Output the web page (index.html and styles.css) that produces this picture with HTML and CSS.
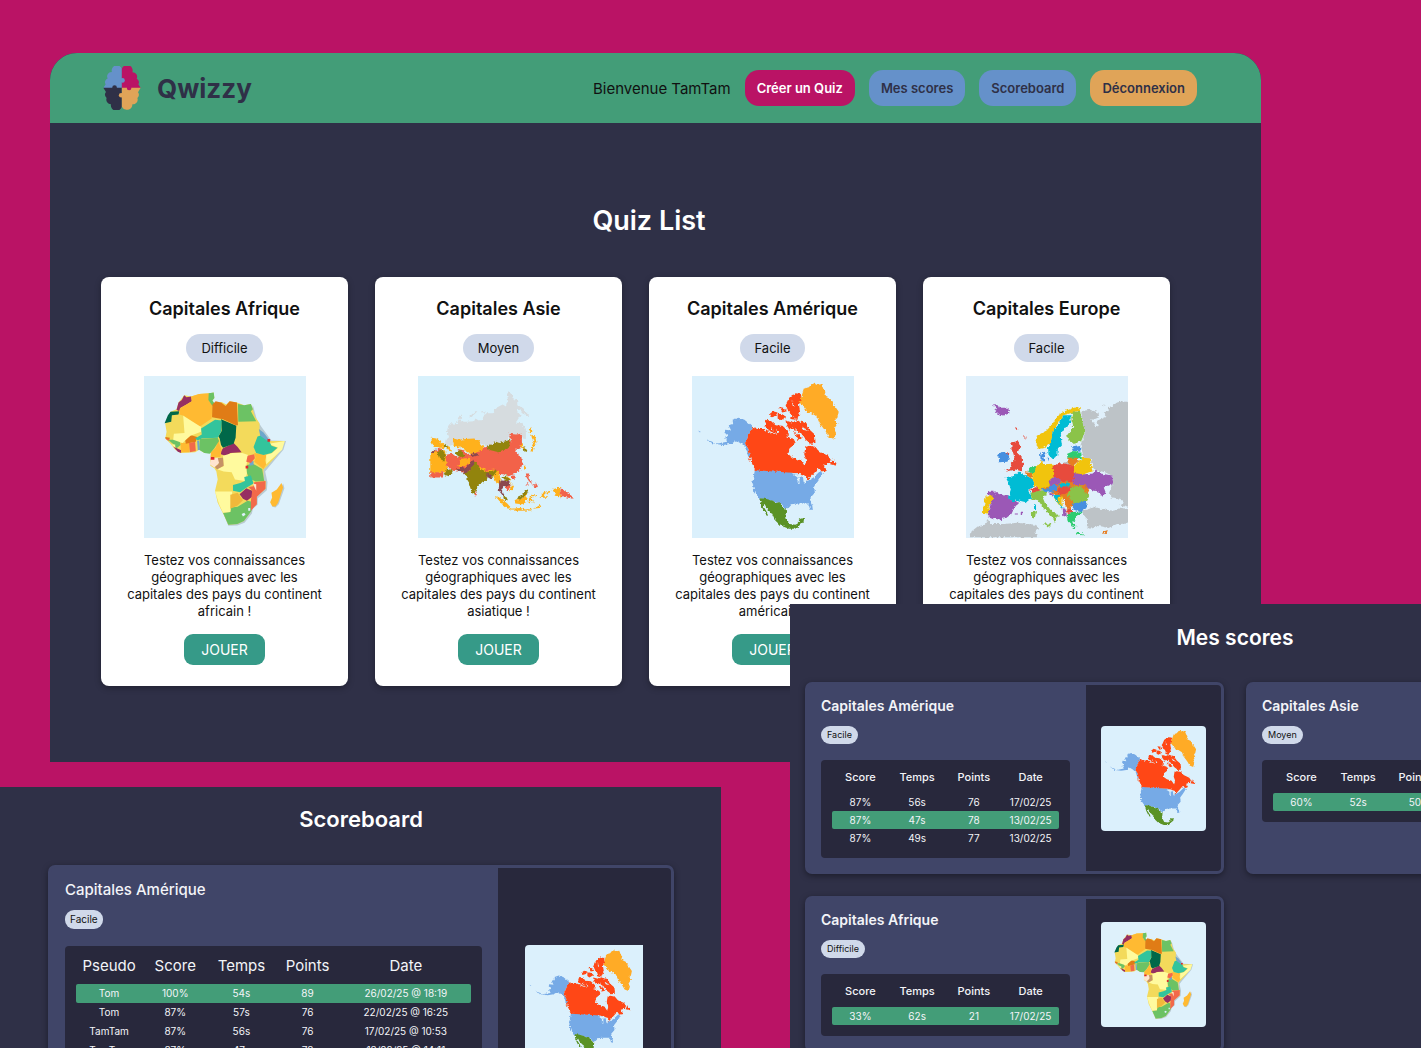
FILE: index.html
```
<!DOCTYPE html>
<html lang="fr">
<head>
<meta charset="utf-8">
<meta name="viewport" content="width=device-width, initial-scale=1">
<title>Qwizzy</title>
<link rel="stylesheet" href="styles.css">
</head>
<body>
<svg class="sprite" aria-hidden="true">
  <filter id="coast" x="0" y="0" width="1" height="1">
    <feTurbulence type="fractalNoise" baseFrequency="0.12" numOctaves="2" seed="4" result="noise"/>
    <feDisplacementMap in="SourceGraphic" in2="noise" scale="12" xChannelSelector="R" yChannelSelector="G"/>
  </filter>
  <symbol id="map-afrique" viewBox="24 18 488 488">
    <path fill="#def1fb" d="M24 18h488v488H24z"/>
    <path fill="#b9cbd2" d="M352 106L364 150 378 172 408 212 452 214 444 240 400 292 389 306 396 338 394 362 367 386 366 406 352 418 349 432 327 460 305 468 278 469 266 440zM443 342L447 356 430 404 420 414 410 412z"/>
    <path fill="#f3da5b" d="M145 76L166 80 190 72 222 70 234 68 236 84 230 92 236 104 258 96 272 104 282 94 304 98 326 106 346 102 352 118 358 140 372 160 372 178 392 206 404 214 448 214 440 235 420 262 396 288 384 300 384 330 391 336 390 358 362 382 362 402 348 412 345 428 325 455 305 464 278 466 266 440 258 424 246 400 238 364 246 330 242 306 236 296 224 288 224 268 228 260 224 250 206 250 190 240 178 248 134 250 118 240 104 222 88 206 92 186 88 162 104 126 122 118 128 98z"/>
    <path fill="#962f62" d="M122 120L128 98 138 90 145 76 152 82 166 80 168 94 152 104 134 114 130 124zM262 236L294 220 306 232 318 248 284 250 272 260 252 252zM112 230L136 242 136 250 126 246zM312 374L332 356 350 364 350 382 334 394 322 388z"/>
    <path fill="#006849" d="M86 160L96 136 104 126 130 124 128 134 108 136 106 156zM256 148L302 168 300 204 294 222 262 234 256 226 252 206 248 200 258 184z"/>
    <path fill="#ffba32" d="M166 80L190 72 222 70 220 92 230 106 228 146 196 168 190 170 144 138 130 134 132 116 168 94zM250 206L250 220 258 240 254 262 224 262 226 248 240 234zM356 250L394 256 388 272 392 284 384 298 356 276 360 264zM134 220L162 220 160 248 136 248zM438 340L443 354 428 400 420 411 410 410 404 398 410 384 408 370 424 360z"/>
    <path fill="#6cc264" d="M219 70L234 68 236 84 230 92 236 100 230 108 218 90zM307 102L326 106 346 102 352 118 346 124 362 154 308 156zM192 208L246 204 250 214 236 236 222 252 206 250 190 240zM96 210L130 210 134 226 122 236 114 224zM334 286L352 282 380 298 386 334 360 336 340 326 332 304zM262 430L284 428 286 414 306 412 336 394 346 396 348 424 325 455 305 464 278 466z"/>
    <path fill="#e07c16" d="M230 104L240 94 256 98 270 108 282 94 304 98 307 166 300 166 262 148 229 142zM148 212L164 196 184 202 180 216 150 222zM88 202L102 204 100 210 90 208z"/>
    <path fill="#fffa9e" d="M142 138L196 172 196 186 180 192 164 198 150 210 140 220 112 210 114 192 146 190zM400 222L448 214 440 240 392 284 392 256 410 250 428 234 408 226zM262 258L290 250 320 250 338 256 332 290 334 312 328 334 298 330 288 308 264 306 242 298 264 290zM238 366L290 366 284 428 262 430 250 404zM106 224L118 224 118 234z"/>
    <path fill="#33c49c" d="M178 206L198 194 196 176 238 150 258 152 256 186 246 204 198 206 186 212zM366 200L380 196 402 216 408 228 426 234 408 250 384 256 362 250 354 232zM292 346L314 340 328 334 326 322 346 318 354 342 330 356 314 368 292 364z"/>
    <path fill="#6da7cc" d="M370 178L384 188 398 206 396 214 374 198zM184 214L190 212 192 240 186 242zM342 276L354 274 354 286 342 288z"/>
    <path fill="#f2694a" d="M336 258L356 254 358 266 346 280 332 276zM160 220L178 216 180 244 162 248zM356 338L390 334 390 358 364 382 364 404 346 424 346 394 350 364 338 352 354 350zM88 206L100 208 98 214z"/>
    <path fill="#c69365" d="M240 266L262 264 264 288 244 300 236 290 248 284z"/>
    <path fill="#ffe5cf" d="M226 268L246 264 250 280 236 294 222 284zM352 342L362 344 362 364z"/>
    <path fill="#e0262c" d="M225 262h11v8h-11zM396 208h8v8h-8zM330 288h8v9h-8z"/>
    <path fill="#f1b83b" d="M284 376L306 370 322 392 306 408 284 418z"/>
    <path fill="#def1fb" d="M318 434L326 430 330 436 322 441zM338 416h6v8h-6z"/>
  </symbol>
  <symbol id="map-asie" viewBox="21 18 488 488">
    <path fill="#d8f1fc" d="M21 18h488v488H21z"/>
    <g filter="url(#coast)">
      <path fill="none" d="M21 18h488v488H21z"/>
      <path fill="#d6dcdf" d="M110 176L118 160 134 162 140 158 148 136 152 142 146 154 166 156 190 154 194 146 204 152 220 150 218 136 230 130 246 130 260 112 276 104 286 110 292 90 289 72 297 64 304 72 306 84 320 90 320 106 338 118 356 138 346 138 326 118 320 124 330 136 316 158 334 160 346 178 346 208 336 206 330 196 300 196 288 220 230 232 206 218 168 214 130 210 132 222 118 228 102 222 104 210 114 204 108 190zM174 142L194 124 200 124 182 142zM212 124h12v4h-12z"/>
      <path fill="#f2624a" d="M108 256L146 262 190 246 230 230 300 214 316 250 290 316 250 310 206 314 176 312 120 302z"/>
      <path fill="#ffb11b" d="M66 244L102 242 112 300 60 310z"/>
      <path fill="#ffb11b" d="M128 206L142 210 164 208 190 206 206 212 208 224 222 232 206 250 180 252 160 240 152 232 140 236 128 224zM142 290L148 268 178 264 178 282 150 292zM200 290L232 302 252 298 250 306 228 306 206 302zM58 250L72 248 84 266 98 274 112 296 108 308 58 310zM62 204L76 206 88 214 104 228 100 236 70 230 62 218zM104 226L118 232 120 246 112 242zM246 316L262 300 270 326 268 346 258 342zM286 318L300 328 298 338 310 350 306 360 294 366 304 350zM312 390L332 388 350 370 346 398 334 404 314 402zM254 380L266 384 290 402 300 414 292 418 276 406zM298 418L330 416 344 420 364 418 362 423 330 424 300 423zM366 418L380 412 392 404 386 416zM356 382L378 376 376 380 362 384 370 402 360 392 358 402 354 398zM394 370L404 366 400 382 394 380zM406 366L426 364 420 370 406 372zM426 360L444 354 450 358 450 384 436 378zM360 176L362 168 366 190 354 190zM362 194L374 200 378 218 370 232 366 246 360 250 362 234 370 216 364 204zM328 222L336 220 340 236 332 234zM340 288h6v12h-6zM388 380h24v5h-24z"/>
      <path fill="#f2624a" d="M196 248L212 244 230 230 262 248 290 240 302 214 296 192 316 194 334 192 334 224 328 236 314 240 320 250 318 254 332 262 336 282 330 298 316 312 294 320 276 312 250 300 232 302 204 292 188 270 202 262zM104 256L124 252 142 266 142 296 122 304 108 286zM58 308L98 308 96 324 58 324zM70 244L88 234 96 240 84 248zM140 238L160 242 170 254 162 258 146 246zM282 346L300 346 300 356 290 364zM450 356L478 372 490 388 470 384 460 380 450 384zM192 368L198 368 198 380 191 380zM304 318h8v10h-8zM346 312L356 312 354 326 366 340 356 336 348 324zM362 344L372 348 378 338 382 352 374 354zM344 350L354 336 350 346z"/>
      <path fill="#928410" d="M228 228L248 222 250 214 266 220 300 210 294 236 264 248 234 240zM178 284L196 276 204 296 232 308 256 300 258 306 240 328 232 318 228 332 208 344 200 352 192 370 184 372 174 340 168 320 160 312 178 302zM128 246L150 242 162 260 150 266 138 256zM98 314L110 296 126 306 114 320zM78 248L96 240 104 260 100 276 84 264zM272 322L288 318 296 334 284 336zM276 374L286 380 292 392 280 390zM316 386L336 376 346 362 352 366 342 378 330 390zM338 232L348 236 350 246 342 246zM102 222L110 228 110 238 102 232z"/>
      <path fill="#8b4a4f" d="M136 296L168 292 186 268 192 278 178 300 162 314 156 304 138 304zM174 254L196 250 206 256 186 262zM230 308L244 318 240 328 230 322zM266 332L290 334 300 346 280 350 272 362 282 378 276 378 264 362zM62 250L74 238 70 250z"/>
    </g>
  </symbol>
  <symbol id="map-amerique" viewBox="18 18 488 488">
    <path fill="#dbf0fc" d="M18 18h488v488H18z"/>
    <g filter="url(#coast)">
      <path fill="none" d="M18 18h488v488H18z"/>
      <path fill="#ffab26" d="M342 98L348 78 356 56 370 52 380 40 396 44 408 42 414 58 420 66 416 78 436 88 448 108 460 126 456 144 450 150 456 162 446 178 452 190 446 208 430 202 420 184 402 160 394 140 378 130 366 128 358 116z"/>
      <path fill="#76aae6" d="M140 150L158 144 176 150 200 170 178 222 188 238 194 262 188 260 180 234 166 220 152 212 136 222 112 226 84 222 104 220 124 216 118 204 130 196 116 190 118 180 136 182 128 166 142 162zM60 208L84 218 82 222zM36 182L44 186 42 188zM208 300L318 308 348 318 366 334 384 324 404 304 412 312 398 334 386 350 388 370 372 388 380 406 382 422 374 420 368 402 340 402 316 404 302 420 288 404 270 396 240 390 220 386 206 366 200 338z"/>
      <path fill="#ff4713" d="M200 170L214 178 236 178 252 188 272 194 300 198 310 204 322 206 330 222 312 236 308 254 324 266 346 272 358 290 362 270 356 254 360 230 372 228 390 232 402 246 428 258 436 270 430 282 414 286 420 304 408 306 400 294 388 308 370 328 360 336 362 320 348 316 328 310 210 302 196 276 188 238 178 222zM236 170L242 150 258 156 270 166 290 168 308 184 310 198 284 198 262 188 248 182zM304 100L312 82 330 70 346 72 346 92 340 104 344 126 334 150 318 148 316 130 306 122 300 106zM250 134L262 124 276 128 270 138 256 142zM276 130L292 134 302 142 284 152 276 146zM280 112L296 114 304 124 290 128zM300 152L320 158 332 152 356 158 370 178 388 194 390 220 376 222 358 208 344 190 322 176 312 180 302 164zM322 186L340 194 350 206 338 210zM434 284L442 266 444 276 456 280 454 288zM404 300L420 290 422 300zM186 266L192 268 192 278zM200 284L212 302 206 300z"/>
      <path fill="#dbf0fc" d="M318 92L326 108 322 110zM262 150L272 160 264 158zM308 132L328 142 310 140zM282 160L296 162 286 166zM330 170L336 196 330 192zM346 168L368 184 352 180zM272 176L280 190 274 190zM258 172L264 182 256 180zM322 314L346 314 350 322 342 322 342 344 336 342 336 324zM352 320L362 326 358 344 354 336z"/>
      <path fill="#5a9226" d="M221 386L240 388 262 394 270 400 282 398 288 408 304 424 302 446 312 464 330 466 340 460 340 450 356 446 354 458 346 464 338 472 332 482 326 478 310 478 284 468 266 450 258 432 244 418 236 402 234 412 246 432 248 440 240 436 228 412z"/>
    </g>
  </symbol>
  <symbol id="map-europe" viewBox="15 18 488 488">
    <path fill="#e0f0fb" d="M15 18h488v488H15z"/>
    <g filter="url(#coast)">
      <path fill="none" d="M15 18h488v488H15z"/>
      <path fill="#bdc3c7" d="M362 124L388 120 414 128 416 142 398 150 388 148 398 156 406 168 412 170 408 154 424 146 438 140 430 128 446 122 444 112 456 108 470 98 488 94 520 100V420L480 408 490 400 480 388 454 384 446 370 456 346 458 320 434 308 408 302 396 290 392 268 370 264 364 242 360 226 366 210 374 188 366 156zM424 106L432 104 432 110zM366 424L382 420 400 412 430 420 460 424 482 414 520 424V462L470 464 444 476 414 470 392 478 376 472 382 450 368 436zM26 504L32 486 52 470 72 466 80 452 88 464 130 464 170 460 224 466 232 478 222 490 230 504zM312 278L330 276 330 286 312 284z"/>
      <path fill="#e67e22" d="M218 316L276 290 336 286 366 306 384 362 372 396 330 412 306 388 270 368 236 358z"/>
      <path fill="#9b59b6" d="M96 104L110 102 114 114 142 114 146 130 128 138 110 132 102 124 110 118zM82 364L98 364 108 372 142 380 150 392 176 400 162 412 152 434 136 446 112 450 96 446 80 440 84 420 96 384 80 376zM336 310L370 314 398 312 406 300 420 312 456 318 458 340 430 354 436 370 426 382 414 366 386 360 370 346 340 346 330 332zM262 328L286 320 302 334 290 344 270 346 260 338zM306 416L318 422 318 442 308 440zM262 370L278 372 272 382zM162 432h8v5h-8zM180 430h4v4h-4z"/>
      <path fill="#f1c40f" d="M228 198L258 182 276 162 290 138 312 124 340 114 362 112 360 122 330 130 308 136 290 164 276 186 272 220 252 234 234 238 228 226zM74 382L96 378 98 388 84 410 82 432 62 430 70 404zM216 292L232 288 242 274 250 284 276 282 280 320 264 334 268 350 234 358 222 348 214 320zM340 290L364 264 388 266 392 290 396 304 370 314 340 310zM280 384L306 384 306 410 294 406z"/>
      <path fill="#00bcd4" d="M276 184L292 166 308 136 330 136 330 160 316 172 300 196 304 224 292 236 290 258 276 268 264 256 262 234 272 214zM134 322L160 320 174 306 196 318 216 328 222 346 206 360 212 386 196 398 170 392 156 398 142 384 150 360 144 342zM292 344L326 338 330 350 302 354zM276 378L304 374 290 388 300 412 310 416 296 404zM220 408L226 404 226 420 220 420z"/>
      <path fill="#8bc34a" d="M336 124L350 126 358 122 364 150 374 186 362 214 342 222 324 214 320 196 338 172 332 146zM210 370L232 362 256 362 258 378 244 380 252 398 272 424 298 440 288 442 284 460 274 442 250 418 232 392 212 388zM246 462L272 462 268 474 256 470zM214 428L226 426 222 448 212 444zM330 352L366 348 386 376 380 398 350 404 330 396 322 376z"/>
      <path fill="#e74c3c" d="M152 218L172 214 178 230 170 250 182 262 188 284 184 306 164 300 140 306 134 300 152 294 150 282 162 270 158 252 152 240zM276 288L304 280 336 286 342 324 334 338 304 334 278 318zM208 360L226 352 240 362 216 370zM288 362L308 350 334 352 320 370 298 378zM318 420L330 416 340 430 322 434zM134 246L146 250 140 258zM164 174h5v6h-5zM190 200h4v6h-4z"/>
      <path fill="#448fe0" d="M120 248L134 246 146 260 140 276 112 278 118 266 108 262zM334 230L358 226 360 246 340 244zM238 252L252 246 256 258 248 262 252 276 240 272zM258 264L264 264 262 276zM236 358L262 356 270 346 292 346 288 364 262 370zM334 402L378 396 378 416 360 428 338 420z"/>
      <path fill="#2ecc71" d="M320 252L340 244 362 250 364 266 340 266 320 264zM200 304L214 290 226 290 222 308 212 312zM318 436L340 428 366 426 362 436 346 438 346 452 338 456 348 470 340 478 332 466 322 456zM346 490L366 492 370 498 348 496z"/>
      <path fill="#e67e22" d="M320 264L352 264 352 276 336 290 322 280zM192 308L214 310 214 328 198 318zM304 374L322 378 336 400 328 420 312 412 312 390zM362 350L376 348 386 362 380 376zM426 488L442 482 440 488 430 494z"/>
    </g>
  </symbol>
</svg>

<div class="canvas">
  <section class="window window-home">
    <header class="topbar">
      <a class="brand" href="#accueil">
        <svg class="logo" viewBox="190 64 115 132" aria-hidden="true">
          <path fill="#6591ca" d="M247 130V72A15 15 0 0 0 217 82A13 13 0 0 0 204 101A12 12 0 0 0 198 119L191 130z"/>
          <path fill="#ba1365" d="M247 130V72A16 16 0 0 1 279 82A14 14 0 0 1 292 102A12 12 0 0 1 297 119L304 130z"/>
          <path fill="#2f3047" d="M247 129V187A17 17 0 0 1 214 179A14 14 0 0 1 201 160A12 12 0 0 1 199 142L191 129z"/>
          <path fill="#e0a458" d="M247 129V187A17 17 0 0 0 279 179A14 14 0 0 0 294 160A12 12 0 0 0 296 143L304 129z"/>
          <circle cx="249" cy="107" r="7" fill="#6591ca"/>
          <circle cx="269" cy="130" r="7" fill="#ba1365"/>
          <circle cx="245" cy="152" r="7" fill="#e0a458"/>
          <circle cx="225" cy="129" r="7" fill="#2f3047"/>
        </svg>
        <span>Qwizzy</span>
      </a>
      <nav class="nav">
        <span class="welcome">Bienvenue TamTam</span>
        <a class="pill pill-pink" href="#creer">Créer un Quiz</a>
        <a class="pill pill-blue" href="#mes-scores">Mes scores</a>
        <a class="pill pill-blue" href="#scoreboard">Scoreboard</a>
        <button class="pill pill-orange" type="button">Déconnexion</button>
      </nav>
    </header>
    <main class="home">
      <h1 class="home-title">Quiz List</h1>
      <div class="quiz-grid">
        <article class="quiz">
          <h2>Capitales Afrique</h2>
          <span class="level">Difficile</span>
          <svg class="map" role="img" aria-label="Afrique"><use href="#map-afrique"/></svg>
          <p>Testez vos connaissances géographiques avec les capitales des pays du continent africain !</p>
          <button type="button" class="play">JOUER</button>
        </article>
        <article class="quiz">
          <h2>Capitales Asie</h2>
          <span class="level">Moyen</span>
          <svg class="map" role="img" aria-label="Asie"><use href="#map-asie"/></svg>
          <p>Testez vos connaissances géographiques avec les capitales des pays du continent asiatique !</p>
          <button type="button" class="play">JOUER</button>
        </article>
        <article class="quiz">
          <h2>Capitales Amérique</h2>
          <span class="level">Facile</span>
          <svg class="map" role="img" aria-label="Amérique"><use href="#map-amerique"/></svg>
          <p>Testez vos connaissances géographiques avec les capitales des pays du continent américain !</p>
          <button type="button" class="play">JOUER</button>
        </article>
        <article class="quiz">
          <h2>Capitales Europe</h2>
          <span class="level">Facile</span>
          <svg class="map" role="img" aria-label="Europe"><use href="#map-europe"/></svg>
          <p>Testez vos connaissances géographiques avec les capitales des pays du continent européen !</p>
          <button type="button" class="play">JOUER</button>
        </article>
      </div>
    </main>
  </section>

  <section class="window window-board">
    <h2 class="window-title">Scoreboard</h2>
    <article class="card card-board">
      <div class="card-body">
        <h3>Capitales Amérique</h3>
        <span class="tag">Facile</span>
        <div class="sheet">
          <table>
            <colgroup><col><col><col><col><col class="wide"></colgroup>
            <thead><tr><th>Pseudo</th><th>Score</th><th>Temps</th><th>Points</th><th>Date</th></tr></thead>
            <tbody>
              <tr class="best"><td>Tom</td><td>100%</td><td>54s</td><td>89</td><td>26/02/25 @ 18:19</td></tr>
              <tr><td>Tom</td><td>87%</td><td>57s</td><td>76</td><td>22/02/25 @ 16:25</td></tr>
              <tr><td>TamTam</td><td>87%</td><td>56s</td><td>76</td><td>17/02/25 @ 10:53</td></tr>
              <tr><td>TamTam</td><td>87%</td><td>47s</td><td>78</td><td>13/02/25 @ 14:11</td></tr>
            </tbody>
          </table>
        </div>
      </div>
      <div class="card-side"><svg class="map" role="img" aria-label="Amérique"><use href="#map-amerique"/></svg></div>
    </article>
  </section>

  <section class="window window-scores">
    <h2 class="window-title">Mes scores</h2>
    <div class="score-grid">
      <article class="card">
        <div class="card-body">
          <h3>Capitales Amérique</h3>
          <span class="tag">Facile</span>
          <div class="sheet">
            <table>
              <thead><tr><th>Score</th><th>Temps</th><th>Points</th><th>Date</th></tr></thead>
              <tbody>
                <tr><td>87%</td><td>56s</td><td>76</td><td>17/02/25</td></tr>
                <tr class="best"><td>87%</td><td>47s</td><td>78</td><td>13/02/25</td></tr>
                <tr><td>87%</td><td>49s</td><td>77</td><td>13/02/25</td></tr>
              </tbody>
            </table>
          </div>
        </div>
        <div class="card-side"><svg class="map" role="img" aria-label="Amérique"><use href="#map-amerique"/></svg></div>
      </article>
      <article class="card">
        <div class="card-body">
          <h3>Capitales Asie</h3>
          <span class="tag">Moyen</span>
          <div class="sheet">
            <table>
              <thead><tr><th>Score</th><th>Temps</th><th>Points</th><th>Date</th></tr></thead>
              <tbody>
                <tr class="best"><td>60%</td><td>52s</td><td>50</td><td>17/02/25</td></tr>
              </tbody>
            </table>
          </div>
        </div>
        <div class="card-side"><svg class="map" role="img" aria-label="Asie"><use href="#map-asie"/></svg></div>
      </article>
      <article class="card">
        <div class="card-body">
          <h3>Capitales Afrique</h3>
          <span class="tag">Difficile</span>
          <div class="sheet">
            <table>
              <thead><tr><th>Score</th><th>Temps</th><th>Points</th><th>Date</th></tr></thead>
              <tbody>
                <tr class="best"><td>33%</td><td>62s</td><td>21</td><td>17/02/25</td></tr>
              </tbody>
            </table>
          </div>
        </div>
        <div class="card-side"><svg class="map" role="img" aria-label="Afrique"><use href="#map-afrique"/></svg></div>
      </article>
    </div>
  </section>
</div>
</body>
</html>
```
FILE: styles.css
```
:root {
  --pink: #ba1365;
  --green: #439d78;
  --navy: #2f3047;
  --blue: #6591ca;
  --orange: #e0a458;
  --teal: #369a88;
  --slate: #404568;
  --ink: #28283c;
  --mist: #d0d9ea;
}

* {
  box-sizing: border-box;
}

body {
  margin: 0;
  font-family: Inter, "Liberation Sans", sans-serif;
  background: var(--pink);
  color: #111;
}

h1,
h2,
h3,
p {
  margin: 0;
}

a {
  color: inherit;
  text-decoration: none;
}

.sprite {
  position: absolute;
  width: 0;
  height: 0;
}

.map {
  display: block;
}

/* Windows laid out freely over the pink canvas */
.canvas {
  position: relative;
  height: 100vh;
  overflow: hidden;
  padding: 53px 160px 0 50px;
}

.window {
  background: var(--navy);
}

.window-home {
  border-radius: 27px 27px 0 0;
  overflow: hidden;
}

.window-board {
  position: absolute;
  left: 0;
  top: 787px;
  width: 721px;
  padding: 18px 47px 48px 48px;
}

.window-scores {
  position: absolute;
  left: 790px;
  top: 604px;
  width: 890px;
  padding: 20px 15px 32px;
}

.window-title {
  color: #fff;
  font-size: 22px;
  line-height: 28px;
  font-weight: 600;
  text-align: center;
}

.window-scores .window-title {
  font-size: 21px;
}

/* Home */
.topbar {
  display: flex;
  align-items: center;
  justify-content: space-between;
  height: 70px;
  padding: 0 64px 0 53px;
  background: var(--green);
}

.brand {
  display: flex;
  align-items: center;
  gap: 16px;
  color: var(--navy);
  font-size: 26px;
  font-weight: 700;
}

.logo {
  width: 38px;
  height: 44px;
}

.nav {
  display: flex;
  align-items: center;
  gap: 14px;
}

.welcome {
  font-size: 15px;
}

.pill {
  display: flex;
  align-items: center;
  height: 36px;
  padding: 0 12px;
  border: 0;
  border-radius: 14px;
  color: var(--navy);
  font-family: inherit;
  font-size: 13px;
  font-weight: 600;
}

.pill-pink {
  background: var(--pink);
  color: #fff;
}

.pill-blue {
  background: var(--blue);
}

.pill-orange {
  background: var(--orange);
}

.home {
  padding: 80px 64px 76px 51px;
}

.home-title {
  color: #fff;
  font-size: 27px;
  line-height: 36px;
  font-weight: 600;
  text-align: center;
}

.quiz-grid {
  display: grid;
  grid-template-columns: repeat(4, 1fr);
  gap: 27px;
  margin-top: 38px;
  padding-right: 27px;
}

.quiz {
  display: flex;
  flex-direction: column;
  align-items: center;
  gap: 14px;
  padding: 21px 24px;
  border-radius: 8px;
  background: #fff;
  box-shadow: 0 2px 6px rgba(0, 0, 0, 0.3);
}

.quiz h2 {
  font-size: 18px;
  line-height: 22px;
  font-weight: 600;
  white-space: nowrap;
}

.quiz p {
  font-size: 13px;
  line-height: 17px;
  text-align: center;
}

.quiz .map {
  width: 162px;
  height: 162px;
}

.level {
  padding: 0 15px;
  border-radius: 14px;
  background: var(--mist);
  font-size: 13px;
  line-height: 28px;
}

.play {
  height: 31px;
  padding: 0 17px;
  border: 0;
  border-radius: 9px;
  background: var(--teal);
  color: #fff;
  font-family: inherit;
  font-size: 14px;
}

/* Score cards */
.score-grid {
  display: grid;
  grid-template-columns: 1fr 1fr;
  gap: 22px;
  margin-top: 30px;
}

.card {
  display: flex;
  border: 3px solid var(--slate);
  border-radius: 7px;
  background: var(--slate);
  box-shadow: 0 2px 6px rgba(0, 0, 0, 0.4);
}

.card-body {
  flex: 1;
  display: flex;
  flex-direction: column;
  align-items: flex-start;
  padding: 13px 16px 13px 13px;
  color: #f3f4f8;
}

.card h3 {
  font-size: 14px;
  line-height: 16px;
  font-weight: 600;
}

.tag {
  margin: 12px 0 16px;
  padding: 0 6px;
  border-radius: 9px;
  background: var(--mist);
  color: #111;
  font-size: 9px;
  line-height: 18px;
}

.sheet {
  width: 100%;
  padding: 11px;
  border-radius: 4px;
  background: var(--ink);
}

.sheet table {
  width: 100%;
  table-layout: fixed;
  border-collapse: collapse;
}

.sheet th {
  height: 22px;
  padding: 0 0 9px;
  font-size: 11px;
  line-height: 13px;
  font-weight: 500;
  text-align: center;
}

.sheet td {
  height: 18px;
  padding: 0;
  font-size: 10px;
  line-height: 18px;
  text-align: center;
}

.best {
  background: var(--green);
}

.best td:first-child {
  border-radius: 2px 0 0 2px;
}

.best td:last-child {
  border-radius: 0 2px 2px 0;
}

.card-side {
  display: flex;
  align-items: center;
  padding: 0 15px;
  border-radius: 0 4px 4px 0;
  background: var(--ink);
}

.card-side .map {
  width: 105px;
  height: 105px;
  border-radius: 4px;
}

.card-board {
  min-height: 278px;
  margin-top: 32px;
}

.card-board .card-body {
  padding: 14px 16px 14px 14px;
}

.card-board h3 {
  font-size: 15px;
  font-weight: 500;
}

.card-board .tag {
  margin-bottom: 17px;
  padding: 0 5px;
  font-size: 10px;
  line-height: 19px;
}

.card-board .wide {
  width: 33%;
}

.card-board th {
  height: 27px;
  font-size: 15px;
  line-height: 18px;
  font-weight: 400;
}

.card-board td {
  height: 19px;
  line-height: 19px;
}

.card-board .card-side {
  padding: 0 28px 0 27px;
}

.card-board .map {
  width: 118px;
  height: 118px;
  border-radius: 4px 0 0 4px;
}
```
